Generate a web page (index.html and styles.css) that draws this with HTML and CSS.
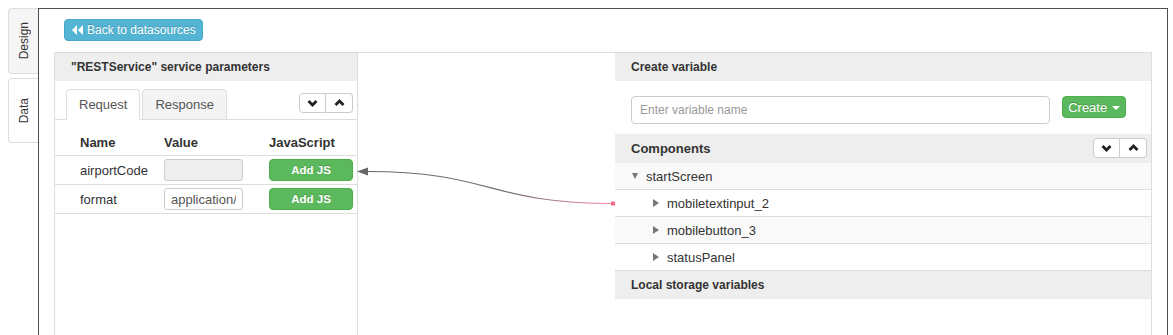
FILE: index.html
```html
<!DOCTYPE html>
<html lang="en">
<head>
    <meta charset="UTF-8">
    <title>Datasource mapping</title>
    <link rel="stylesheet" href="styles.css">
</head>
<body>
    <div class="app">
        <!-- Abas laterais -->
        <nav class="side-tabs">
            <div class="side-tab"><span>Design</span></div>
            <div class="side-tab active"><span>Data</span></div>
        </nav>

        <div class="frame">
            <div class="toolbar">
                <button class="btn btn-info">
                    <svg width="11" height="10" viewBox="0 0 11 10"><path d="M5 0 L0 5 L5 10 Z M11 0 L6 5 L11 10 Z" fill="#fff"/></svg>
                    Back to datasources
                </button>
            </div>

            <div class="panels">
                <!-- Parâmetros do serviço -->
                <section class="panel panel-params">
                    <div class="panel-heading">"RESTService" service parameters</div>
                    <div class="tab-bar">
                        <div class="tab active">Request</div>
                        <div class="tab">Response</div>
                        <div class="btn-group">
                            <button class="btn-arrow"><svg width="11" height="8" viewBox="0 0 11 8"><path d="M1.5 2 L5.5 6 L9.5 2" fill="none" stroke="#222" stroke-width="2.8"/></svg></button>
                            <button class="btn-arrow"><svg width="11" height="8" viewBox="0 0 11 8"><path d="M1.5 6 L5.5 2 L9.5 6" fill="none" stroke="#222" stroke-width="2.8"/></svg></button>
                        </div>
                    </div>
                    <div class="param-table">
                        <div class="param-row param-head">
                            <div class="cell cell-name">Name</div>
                            <div class="cell">Value</div>
                            <div class="cell">JavaScript</div>
                        </div>
                        <div class="param-row">
                            <div class="cell cell-name">airportCode</div>
                            <div class="cell"><input class="value-input" type="text" disabled></div>
                            <div class="cell"><button class="btn btn-success btn-js">Add JS</button></div>
                        </div>
                        <div class="param-row">
                            <div class="cell cell-name">format</div>
                            <div class="cell"><input class="value-input" type="text" value="application/json"></div>
                            <div class="cell"><button class="btn btn-success btn-js">Add JS</button></div>
                        </div>
                    </div>
                </section>

                <div class="canvas"></div>

                <!-- Variáveis -->
                <section class="panel panel-vars">
                    <div class="panel-heading">Create variable</div>
                    <div class="create-row">
                        <input class="var-input" type="text" placeholder="Enter variable name">
                        <button class="btn btn-success btn-create">Create <span class="caret"></span></button>
                    </div>
                    <div class="panel-heading heading-tools">
                        <span>Components</span>
                        <div class="btn-group">
                            <button class="btn-arrow"><svg width="11" height="8" viewBox="0 0 11 8"><path d="M1.5 2 L5.5 6 L9.5 2" fill="none" stroke="#222" stroke-width="2.8"/></svg></button>
                            <button class="btn-arrow"><svg width="11" height="8" viewBox="0 0 11 8"><path d="M1.5 6 L5.5 2 L9.5 6" fill="none" stroke="#222" stroke-width="2.8"/></svg></button>
                        </div>
                    </div>
                    <ul class="tree">
                        <li class="tree-item odd"><span class="tri tri-down"></span>startScreen</li>
                        <li class="tree-item child"><span class="tri tri-right"></span>mobiletextinput_2</li>
                        <li class="tree-item child odd"><span class="tri tri-right"></span>mobilebutton_3</li>
                        <li class="tree-item child"><span class="tri tri-right"></span>statusPanel</li>
                    </ul>
                    <div class="panel-heading">Local storage variables</div>
                </section>
            </div>
        </div>
    </div>

    <!-- Ligação entre parâmetro e componente -->
    <svg class="links" width="1173" height="335">
        <defs>
            <linearGradient id="linkGrad" gradientUnits="userSpaceOnUse" x1="367" y1="0" x2="613" y2="0">
                <stop offset="0" stop-color="#666"/>
                <stop offset="0.6" stop-color="#7a7078"/>
                <stop offset="1" stop-color="#f4899d"/>
            </linearGradient>
        </defs>
        <path d="M367 171.5 C 490 171.5, 490 203.5, 612 203.5" fill="none" stroke="url(#linkGrad)" stroke-width="1.2"/>
        <polygon points="357,171.5 368,167.5 368,175.5" fill="#666"/>
        <rect x="611" y="201.5" width="4" height="4" fill="#f26a86"/>
    </svg>
</body>
</html>
```

FILE: styles.css
```css
/* Estilo Global */
body {
    margin: 0;
    font-family: 'Liberation Sans', Arial, sans-serif;
    font-size: 13px;
    color: #333;
    background: #fff;
    overflow: hidden;
}

.app {
    display: flex;
    height: 335px;
}

/* Abas laterais */
.side-tabs {
    width: 38px;
    box-sizing: border-box;
    padding: 8px 0 0 8px;
    display: flex;
    flex-direction: column;
    gap: 4px;
}

.side-tab {
    height: 66px;
    border: 1px solid #ddd;
    border-right: none;
    border-radius: 4px 0 0 4px;
    background: #f5f5f5;
    display: flex;
    align-items: center;
    justify-content: center;
    box-sizing: border-box;
}

.side-tab.active {
    background: #fff;
    height: 65px;
}

.side-tab span {
    writing-mode: vertical-rl;
    transform: rotate(180deg);
    font-size: 12px;
    color: #333;
}

/* Moldura */
.frame {
    flex: 1;
    margin: 8px 5px 0 0;
    border: 1px solid #4a4f55;
    border-bottom: none;
    padding: 0 15px;
    display: flex;
    flex-direction: column;
}

.toolbar {
    padding: 10px 0 11px 10px;
}

.btn {
    font-family: inherit;
    border-radius: 4px;
    color: #fff;
    cursor: pointer;
    text-shadow: 0 -1px 0 rgba(0, 0, 0, 0.2);
}

.btn-info {
    height: 22px;
    width: 139px;
    padding: 0 0 0 7px;
    background: #53b5d3;
    border: 1px solid #46a9c8;
    font-size: 12px;
    display: flex;
    align-items: center;
    gap: 4px;
}

.btn-success {
    background: #5cb85c;
    border: 1px solid #4cae4c;
}

.panels {
    flex: 1;
    display: flex;
    border-top: 1px solid #ddd;
}

.panel {
    border-left: 1px solid #ddd;
    border-right: 1px solid #ddd;
}

.panel-params {
    width: 304px;
    box-sizing: border-box;
}

.canvas {
    width: 257px;
}

.panel-vars {
    width: 537px;
    box-sizing: border-box;
    border-left: none;
}

.panel-heading {
    height: 28px;
    line-height: 28px;
    padding: 0 16px;
    background: #eee;
    font-size: 12px;
    font-weight: bold;
    color: #333;
}

/* Abas Request / Response */
.tab-bar {
    display: flex;
    align-items: flex-end;
    height: 39px;
    box-sizing: border-box;
    padding: 0 4px 0 11px;
    border-bottom: 1px solid #ddd;
}

.tab {
    height: 29px;
    line-height: 29px;
    padding: 0 12px;
    margin-right: 2px;
    margin-bottom: -1px;
    border: 1px solid #ddd;
    border-radius: 4px 4px 0 0;
    background: #f3f3f3;
    color: #555;
}

.tab.active {
    background: #fff;
    border-bottom-color: #fff;
}

.btn-group {
    display: flex;
    margin-left: auto;
    align-self: flex-start;
    margin-top: 12px;
}

.btn-arrow {
    width: 27px;
    height: 20px;
    padding: 0;
    background: #fff;
    border: 1px solid #ccc;
    display: flex;
    align-items: center;
    justify-content: center;
    cursor: pointer;
}

.btn-arrow:first-child {
    border-radius: 4px 0 0 4px;
}

.btn-arrow:last-child {
    border-radius: 0 4px 4px 0;
    border-left: none;
}

/* Tabela de parâmetros */
.param-row {
    display: grid;
    grid-template-columns: 101px 105px 1fr;
    height: 29px;
    box-sizing: border-box;
    border-bottom: 1px solid #ddd;
    align-items: center;
}

.param-head {
    height: 36px;
    align-items: end;
    padding-bottom: 5px;
    font-weight: bold;
}

.cell {
    padding-left: 8px;
}

.cell-name {
    padding-left: 25px;
}

.value-input {
    width: 79px;
    height: 22px;
    box-sizing: border-box;
    border: 1px solid #ccc;
    border-radius: 3px;
    padding: 0 6px;
    font-family: inherit;
    font-size: 13px;
    color: #555;
    background: #fff;
}

.value-input:disabled {
    background: #eee;
}

.btn-js {
    width: 84px;
    height: 22px;
    padding: 0;
    font-size: 11.5px;
    font-weight: bold;
}

/* Criar variável */
.create-row {
    display: flex;
    align-items: flex-start;
    gap: 12px;
    padding: 15px 25px 10px 16px;
}

.var-input {
    flex: 1;
    height: 28px;
    box-sizing: border-box;
    border: 1px solid #ccc;
    border-radius: 4px;
    padding: 0 8px;
    font-family: inherit;
    font-size: 12px;
}

.var-input::placeholder {
    color: #999;
}

.btn-create {
    width: 64px;
    height: 22px;
    padding: 0;
    font-size: 13px;
}

.caret {
    display: inline-block;
    border-top: 4px solid #fff;
    border-left: 4px solid transparent;
    border-right: 4px solid transparent;
    vertical-align: middle;
    margin-left: 1px;
}

.heading-tools {
    display: flex;
    align-items: center;
    font-size: 13px;
    padding-right: 4px;
    height: 29px;
}

.heading-tools .btn-group {
    margin-top: 4px;
}

/* Árvore de componentes */
.tree {
    list-style: none;
    margin: 0;
    padding: 0;
}

.tree-item {
    height: 27px;
    box-sizing: border-box;
    border-bottom: 1px solid #ddd;
    display: flex;
    align-items: center;
    padding-left: 17px;
    background: #fff;
}

.tree-item.odd {
    background: #f9f9f9;
}

.tree-item.child {
    padding-left: 36px;
}

.tri {
    display: inline-block;
    margin-right: 8px;
}

.tri-down {
    border-top: 6px solid #777;
    border-left: 3.5px solid transparent;
    border-right: 3.5px solid transparent;
}

.tri-right {
    border-left: 6px solid #777;
    border-top: 4px solid transparent;
    border-bottom: 4px solid transparent;
    margin-left: 2px;
}

/* Ligações */
.links {
    position: absolute;
    left: 0;
    top: 0;
    pointer-events: none;
}
```
